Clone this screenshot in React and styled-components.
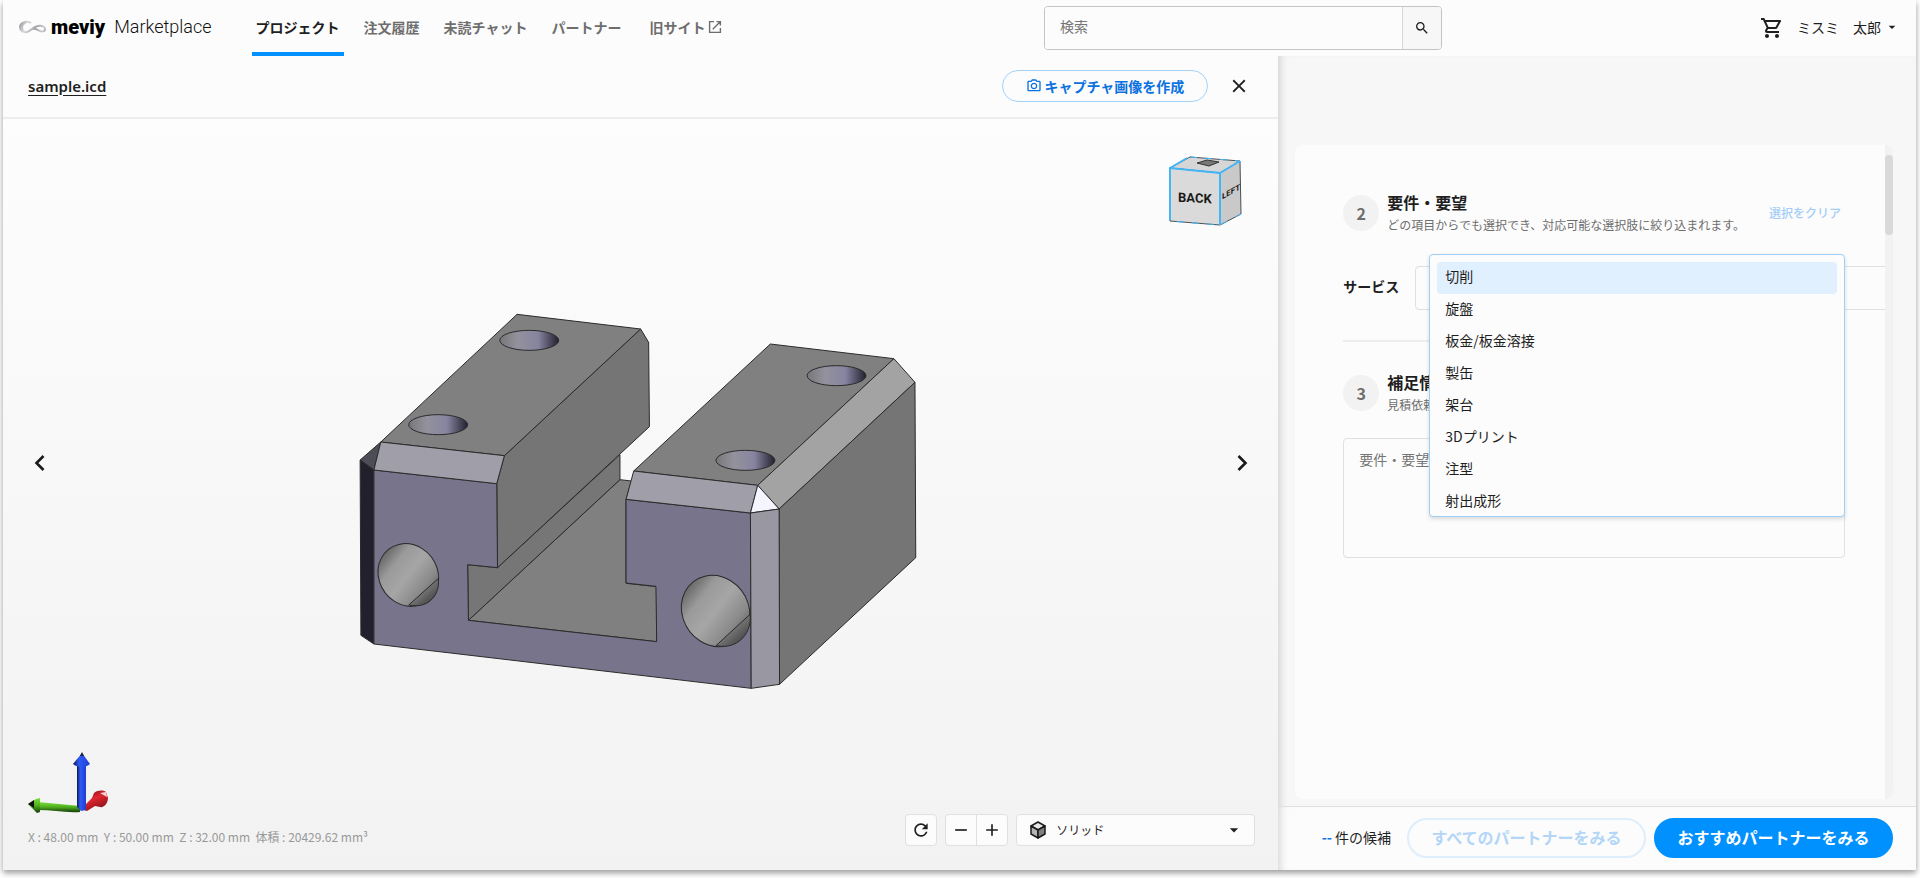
import React, { useState } from 'react'
import styled, { createGlobalStyle } from 'styled-components'
import {
  MdAdd,
  MdArrowDropDown,
  MdClose,
  MdOutlinePhotoCamera,
  MdOutlineShoppingCart,
  MdRefresh,
  MdRemove,
  MdSearch,
} from 'react-icons/md'

const textColor = '#1f1f1f'
const mutedColor = '#6e6e6e'
const lineColor = '#e0e0e0'
const surface = '#fcfcfc'
const primary = '#0091ff'
const link = '#0b72e0'

const navItems = ['プロジェクト', '注文履歴', '未読チャット', 'パートナー']
const services = ['切削', '旋盤', '板金/板金溶接', '製缶', '架台', '3Dプリント', '注型', '射出成形']

const GlobalStyle = createGlobalStyle`
  * { box-sizing: border-box; }
  body {
    margin: 0;
    background: #fff;
    color: ${textColor};
    font-family: "Noto Sans CJK JP", sans-serif;
    font-size: 14px;
    line-height: 20px;
  }
  button, input, select, textarea { font: inherit; color: inherit; margin: 0; }
  button { cursor: pointer; padding: 0; border: 0; background: none; }
  svg { display: block; flex-shrink: 0; }
`

const Frame = styled.div`
  display: flex;
  flex-direction: column;
  min-height: calc(100vh - 8px);
  margin: 0 4px 8px 3px;
  background: ${surface};
  box-shadow: 0 3px 6px rgba(0, 0, 0, 0.4);
`

/* ---- header ---- */

const Header = styled.header`
  display: grid;
  grid-template-columns: 1fr 398px 426px;
  align-items: center;
  column-gap: 32px;
  height: 56px;
  padding: 0 16px;
`

const HeaderLeft = styled.div`
  display: flex;
  align-items: center;
  gap: 40px;
  height: 56px;
`

const Logo = styled.a`
  display: flex;
  align-items: center;
  color: #111;
  text-decoration: none;
  white-space: nowrap;
  font-family: Roboto, sans-serif;
  font-weight: 300;
  font-size: 18px;
  gap: 4px;
  padding-bottom: 2px;
`

const LogoBrand = styled.b`
  font-weight: 900;
  font-size: 20px;
  color: #000;
  margin-right: 5px;
`

const Nav = styled.nav`
  display: flex;
  gap: 16px;
`

const NavLink = styled.a`
  display: flex;
  align-items: center;
  gap: 3px;
  height: 56px;
  padding: 2px 4px 0;
  border-bottom: 4px solid ${p => (p.$active ? primary : 'transparent')};
  color: ${p => (p.$active ? textColor : mutedColor)};
  font-weight: 700;
  text-decoration: none;
  white-space: nowrap;
  &:last-child { margin-left: 4px; }
`

const SearchForm = styled.form`
  display: flex;
  height: 44px;
  border: 1px solid #c4c4c4;
  border-radius: 4px;
  overflow: hidden;
`

const SearchInput = styled.input`
  flex: 1;
  min-width: 0;
  padding: 0 15px 4px;
  border: 0;
  background: ${surface};
  &::placeholder { color: #757575; }
`

const SearchButton = styled.button`
  display: grid;
  place-items: center;
  width: 39px;
  border-left: 1px solid #d6d6d6;
  background: #f7f7f7;
`

const Account = styled.div`
  display: flex;
  align-items: center;
  justify-content: flex-end;
  gap: 9px;
`

const UserButton = styled.button`
  display: flex;
  align-items: center;
  gap: 3px;
  padding-bottom: 2px;
  white-space: pre;
`

/* ---- left: viewer ---- */

const Main = styled.main`
  flex: 1;
  display: grid;
  grid-template-columns: minmax(0, 2fr) minmax(0, 1fr);
`

const Viewer = styled.section`
  display: flex;
  flex-direction: column;
`

const FileBar = styled.div`
  display: flex;
  align-items: center;
  gap: 15px;
  height: 63px;
  padding: 0 23px 2px 25px;
  border-bottom: 2px solid #ededed;
`

const FileName = styled.a`
  margin-right: auto;
  color: ${textColor};
  font-family: "Noto Sans", sans-serif;
  font-size: 15px;
  font-weight: 600;
  text-underline-offset: 3px;
`

const CaptureButton = styled.button`
  display: flex;
  align-items: center;
  gap: 2px;
  height: 32px;
  padding: 0 23px;
  border: 1px solid #a3d3fb;
  border-radius: 16px;
  color: ${link};
  font-weight: 700;
`

const IconButton = styled.button`
  display: grid;
  place-items: center;
  width: 32px;
  height: 32px;
`

const Canvas = styled.div`
  flex: 1;
  display: flex;
  flex-direction: column;
  position: relative;
  background: linear-gradient(#fdfdfd, #f2f2f2);
`

const Stage = styled.div`
  flex: 1;
  display: flex;
  align-items: center;
  justify-content: space-between;
  padding: 0 20px;
`

const ViewCube = styled.svg`
  position: absolute;
  top: 35px;
  right: 33px;
`

const AxisGizmo = styled.svg`
  position: absolute;
  left: 25px;
  bottom: 54px;
`

const CanvasFooter = styled.div`
  display: flex;
  align-items: center;
  gap: 8px;
  height: 64px;
  padding: 0 23px 16px 25px;
`

const Dimensions = styled.p`
  margin: 0 auto 0 0;
  padding-top: 14px;
  color: #999;
  font-size: 12px;
  white-space: pre;
  line-height: 16px;
`

const ToolGroup = styled.div`
  display: flex;
  height: 32px;
  border: 1px solid ${lineColor};
  border-radius: 4px;
  background: ${surface};
`

const ToolButton = styled.button`
  display: grid;
  place-items: center;
  width: 30px;
  & + & {
    width: 31px;
    border-left: 1px solid ${lineColor};
  }
`

const ModePicker = styled.label`
  display: flex;
  align-items: center;
  gap: 10px;
  width: 239px;
  height: 32px;
  padding: 0 10px 0 13px;
  border: 1px solid ${lineColor};
  border-radius: 4px;
  background: ${surface};
`

const PlainSelect = styled.select`
  flex: 1;
  appearance: none;
  padding: 0;
  border: 0;
  background: transparent;
  font-size: 12px;
`

/* ---- right: request form ---- */

const SidePanel = styled.aside`
  display: flex;
  flex-direction: column;
  background: #f7f7f7;
  box-shadow: inset 8px 0 8px -6px rgba(0, 0, 0, 0.16);
`

const Card = styled.div`
  flex: 1;
  display: flex;
  margin: 89px 23px 7px 17px;
  border-radius: 8px;
  background: ${surface};
  overflow: hidden;
`

const CardBody = styled.div`
  flex: 1;
  min-width: 0;
  padding: 45px 40px 0 48px;
  overflow: hidden;
`

const ScrollTrack = styled.div`
  width: 8px;
  padding-top: 10px;
  background: #f2f2f2;
`

const ScrollThumb = styled.div`
  height: 80px;
  border-radius: 4px;
  background: #d9d9d9;
`

const StepHeader = styled.div`
  display: flex;
  align-items: center;
  gap: 8px;
  height: 46px;
`

const StepNumber = styled.span`
  display: grid;
  place-items: center;
  width: 36px;
  height: 36px;
  border-radius: 50%;
  background: #f2f2f2;
  color: ${mutedColor};
  font-size: 16px;
  font-weight: 700;
`

const StepTitle = styled.h2`
  margin: 0 0 4px;
  font-size: 16px;
  line-height: 20px;
`

const StepNote = styled.p`
  margin: 0;
  color: ${mutedColor};
  font-size: 12px;
  line-height: 18px;
  white-space: nowrap;
`

const ClearButton = styled.button`
  margin-left: auto;
  padding-right: 4px;
  color: #a3cdf8;
  font-size: 12px;
  font-weight: 500;
  white-space: nowrap;
`

const FieldRow = styled.div`
  position: relative;
  display: flex;
  align-items: center;
  gap: 16px;
  margin: 30px 0;
`

const FieldLabel = styled.label`
  flex-shrink: 0;
  padding-bottom: 4px;
  font-weight: 700;
`

const ServiceSelect = styled.select`
  flex: 0 0 100%;
  height: 44px;
  appearance: none;
  border: 1px solid ${lineColor};
  border-radius: 4px;
  background: ${surface};
`

/* раскрытый список лежит поверх формы */
const Options = styled.ul`
  position: absolute;
  z-index: 2;
  top: -12px;
  left: 86px;
  right: 0;
  height: 263px;
  margin: 0;
  padding: 7px;
  border: 1px solid #9fcff7;
  border-radius: 4px;
  background: ${surface};
  box-shadow: 0 2px 4px rgba(0, 0, 0, 0.14);
  list-style: none;
`

const Option = styled.li`
  height: 32px;
  padding: 0 8px;
  border-radius: 4px;
  line-height: 28px;
  background: ${p => (p.$selected ? '#e0f0ff' : 'transparent')};
  cursor: pointer;
`

const Divider = styled.hr`
  margin: 0 0 28px;
  border: 0;
  border-top: 2px solid #ededed;
`

const Notes = styled.textarea`
  display: block;
  width: 100%;
  height: 120px;
  margin-top: 22px;
  padding: 10px 15px;
  border: 1px solid ${lineColor};
  border-radius: 4px;
  background: ${surface};
  resize: none;
  &::placeholder { color: #757575; }
`

const ActionBar = styled.footer`
  display: flex;
  align-items: center;
  justify-content: flex-end;
  gap: 8px;
  height: 64px;
  padding: 0 23px 2px 16px;
  border-top: 1px solid ${lineColor};
  background: ${surface};
  box-shadow: inset 8px 0 8px -6px rgba(0, 0, 0, 0.16);
`

const Count = styled.span`
  margin-right: 8px;
  padding-bottom: 2px;
  white-space: nowrap;
  b { color: ${link}; margin-right: 3px; }
`

const PillButton = styled.button`
  width: 239px;
  height: 40px;
  padding-bottom: 2px;
  border-radius: 20px;
  border: 2px solid ${p => (p.$filled ? primary : '#deeefc')};
  background: ${p => (p.$filled ? primary : surface)};
  color: ${p => (p.$filled ? '#fff' : '#b3d6f8')};
  font-size: 16px;
  font-weight: 700;
  white-space: nowrap;
`

function LogoMark() {
  return (
    <svg width="28" height="15" viewBox="0 0 28 15" fill="none" aria-hidden="true">
      <defs>
        <linearGradient id="mark" x1="0" y1="0" x2="28" y2="12" gradientUnits="userSpaceOnUse">
          <stop offset="0" stopColor="#8c8a90" />
          <stop offset="0.3" stopColor="#dedce0" />
          <stop offset="0.6" stopColor="#a3a1a6" />
          <stop offset="0.85" stopColor="#cfcdd1" />
          <stop offset="1" stopColor="#9a989c" />
        </linearGradient>
      </defs>
      <path
        d="M12 3C7 0 1 3 1 7c0 4 4 6 7 5 4-1 5-5 11-6 4-1 7 1 7 3 0 3-4 3-7 1-2-1-4-2-6-1"
        stroke="url(#mark)"
        strokeWidth="2"
      />
      <path d="M1 7C1 3 7 0 12 3 8 2 5 4 4 7c0 3 2 4 4 5-3 1-7-1-7-5z" fill="url(#mark)" />
    </svg>
  )
}

function ExternalIcon() {
  return (
    <svg width="14" height="14" viewBox="0 0 14 14" fill="none" stroke="currentColor" strokeWidth="1.4" aria-hidden="true">
      <path d="M6 1.6H1.6v10.8h10.8V8M8.5 1.6h3.9v4M12.2 1.8 4.8 9.2" />
    </svg>
  )
}

function Chevron({ flip }) {
  return (
    <svg width="24" height="24" viewBox="0 0 24 24" fill="none" stroke="#1a1a1a" strokeWidth="2.6" aria-hidden="true">
      <path d={flip ? 'M8.5 5l7 7-7 7' : 'M16.5 5l-7 7 7 7'} />
    </svg>
  )
}

function SolidIcon() {
  return (
    <svg width="16" height="18" viewBox="0 0 16 18" stroke="#1a1a1a" strokeWidth="1.5" strokeLinejoin="round" aria-hidden="true">
      <path d="M8 1l7 4-7 4-7-4z" fill="#e6e6e6" />
      <path d="M1 5l7 4v8l-7-4z" fill="#b3b3b3" />
      <path d="M15 5L8 9v8l7-4z" fill="#808080" />
    </svg>
  )
}

function Cube() {
  return (
    <ViewCube width="80" height="76" viewBox="0 0 80 76" aria-hidden="true">
      <g stroke="#4a4f55" strokeWidth="1" strokeLinejoin="round">
        <path d="M5 14L25 3 75 7 55 19z" fill="#d6d6d6" />
        <path d="M5 14L55 19v52L5 67z" fill="#dadada" />
        <path d="M55 19L75 7l1 53-21 11z" fill="#c9c9c9" />
      </g>
      <path d="M5 66V14l50 5v52M5 14L22 4M55 19l20-12" fill="none" stroke="#45b6f5" strokeWidth="2" />
      <path d="M25 3l50 4M76 60L55 71 5 67" fill="none" stroke="#45b6f5" strokeWidth="1" strokeDasharray="7 8" />
      <path d="M32 9l10-3 12 2-10 4z" fill="#777" stroke="#333" />
      <g fontFamily="Roboto, sans-serif" fontWeight="700" fill="#1a1a1a">
        <text x="13" y="47" fontSize="13" transform="skewY(3)">BACK</text>
        <text x="57" y="77" fontSize="8" transform="skewY(-29)">LEFT</text>
      </g>
    </ViewCube>
  )
}

function Axes() {
  return (
    <AxisGizmo width="80" height="64" viewBox="0 0 80 64" aria-hidden="true">
      <defs>
        <linearGradient id="axisZ">
          <stop offset="0" stopColor="#0c1450" />
          <stop offset="0.35" stopColor="#2f5bf5" />
          <stop offset="1" stopColor="#1f3fd0" />
        </linearGradient>
        <linearGradient id="axisY" x2="0" y2="1">
          <stop offset="0" stopColor="#7be03a" />
          <stop offset="0.5" stopColor="#4fae1e" />
          <stop offset="1" stopColor="#123d06" />
        </linearGradient>
        <linearGradient id="axisX" x2="0.6" y2="1">
          <stop offset="0" stopColor="#5a0d12" />
          <stop offset="0.5" stopColor="#e02530" />
          <stop offset="1" stopColor="#8a1218" />
        </linearGradient>
      </defs>
      <path d="M53 57l11-11 2-5c4-3 9-3 12-1l2 6c0 5-4 10-8 9l-5-1-8 5z" fill="url(#axisX)" />
      <path d="M72 41l6-1 1 5z" fill="#f7d4d4" />
      <path d="M10 50l42 4v6c-14 1-28-2-42-2z" fill="url(#axisY)" />
      <path d="M0 52l8-5 4-1v14l-3 1z" fill="url(#axisY)" />
      <path d="M0 52l6-4v8z" fill="#111" />
      <path d="M49 12h9v46l-5 1-4-4z" fill="url(#axisZ)" />
      <path d="M54 1l-9 11c4 4 13 4 17 0z" fill="url(#axisZ)" />
      <path d="M52 4l2-4 2 4z" fill="#1a2238" />
    </AxisGizmo>
  )
}

const topHoles = [[494, 151], [256, 404], [1297, 257], [1059, 511]]

function Model() {
  return (
    <svg width="600" height="494" viewBox="2 -222 1568 1482" preserveAspectRatio="none" role="img" aria-label="sample.icd">
      <defs>
        <linearGradient id="holeTop">
          <stop offset="0" stopColor="#77777a" />
          <stop offset="0.3" stopColor="#93929c" />
          <stop offset="0.65" stopColor="#8784a0" />
          <stop offset="1" stopColor="#222030" />
        </linearGradient>
        <linearGradient id="holeFront" x1="0.15" y1="0" x2="0.85" y2="1">
          <stop offset="0.05" stopColor="#5e5e5e" />
          <stop offset="0.28" stopColor="#9a9a9a" />
          <stop offset="0.5" stopColor="#a6a6a6" />
          <stop offset="0.75" stopColor="#8a8a8a" />
          <stop offset="1" stopColor="#4c4c4c" />
        </linearGradient>
        <linearGradient id="holeEdge" x1="0.3" y1="0.4" x2="0.8" y2="0.9">
          <stop offset="0" stopColor="#858585" />
          <stop offset="1" stopColor="#444" />
        </linearGradient>
      </defs>
      <g stroke="#2b2b2b" strokeWidth="1" strokeLinejoin="round">
        {/* floor of the slot and its walls */}
        <path d="M335 991L731 569l30 4-14 55v252l80 10v165z" fill="#808080" vectorEffect="non-scaling-stroke" />
        <path d="M333 824l78 9 320-339v75L335 991z" fill="#767676" vectorEffect="non-scaling-stroke" />
        <path d="M429 497L785 117l21 40 2 253-397 423-2-252z" fill="#757575" vectorEffect="non-scaling-stroke" />
        {/* top faces */}
        <path d="M462 73l323 44-356 380-323-41z" fill="#808080" vectorEffect="non-scaling-stroke" />
        <path d="M1124 162l323 44-356 380-324-43z" fill="#808080" vectorEffect="non-scaling-stroke" />
        {/* right side */}
        <path d="M1447 206l55 71-355 380-56-71z" fill="#a3a3a3" vectorEffect="non-scaling-stroke" />
        <path d="M1147 657l355-380 2 526-356 380z" fill="#757575" vectorEffect="non-scaling-stroke" />
        {/* left chamfer */}
        <path d="M106 456L52 510l36 30z" fill="#4d4d57" vectorEffect="non-scaling-stroke" />
        <path d="M52 510l36 30v522l-34-26z" fill="#23202e" vectorEffect="non-scaling-stroke" />
        {/* front face */}
        <path
          d="M88 540l321 41 2 252-78-9 2 167 492 64-2-166-78-10V628l325 41 2 526L88 1062z"
          fill="#78748b"
          vectorEffect="non-scaling-stroke"
        />
        <path d="M106 456l323 41-20 84-321-41z" fill="#9f9ea9" vectorEffect="non-scaling-stroke" />
        <path d="M767 543l324 43-19 83-325-41z" fill="#9f9ea9" vectorEffect="non-scaling-stroke" />
        <path d="M1091 586l56 71-75 12z" fill="#f5f5ff" vectorEffect="non-scaling-stroke" />
        <path d="M1072 669l75-12 1 526-74 12z" fill="#9897a2" vectorEffect="non-scaling-stroke" />
        {topHoles.map(([x, y]) => (
          <ellipse key={x} cx={x} cy={y} rx="77" ry="30" fill="url(#holeTop)" vectorEffect="non-scaling-stroke" />
        ))}
        <ellipse cx="178" cy="855" rx="78" ry="95" transform="rotate(-15 178 855)" fill="url(#holeFront)" vectorEffect="non-scaling-stroke" />
        <path d="M179 945l77-79c6 44-22 92-77 79z" fill="url(#holeEdge)" vectorEffect="non-scaling-stroke" />
        <ellipse cx="981" cy="963" rx="88" ry="108" transform="rotate(-15 981 963)" fill="url(#holeFront)" vectorEffect="non-scaling-stroke" />
        <path d="M982 1067l89-94c6 48-26 108-89 94z" fill="url(#holeEdge)" vectorEffect="non-scaling-stroke" />
      </g>
    </svg>
  )
}

export default function App() {
  const [service, setService] = useState(services[0])

  return (
    <Frame>
      <GlobalStyle />
      <Header>
        <HeaderLeft>
          <Logo href="#">
            <LogoMark />
            <LogoBrand>meviy</LogoBrand>
            Marketplace
          </Logo>
          <Nav>
            {navItems.map((item, i) => (
              <NavLink key={item} href="#" $active={i === 0}>{item}</NavLink>
            ))}
            <NavLink href="#">旧サイト<ExternalIcon /></NavLink>
          </Nav>
        </HeaderLeft>
        <SearchForm role="search">
          <SearchInput type="search" placeholder="検索" aria-label="検索" />
          <SearchButton type="button" aria-label="検索"><MdSearch size={16} /></SearchButton>
        </SearchForm>
        <Account>
          <IconButton aria-label="カート"><MdOutlineShoppingCart size={24} /></IconButton>
          <UserButton>ミスミ　太郎<MdArrowDropDown size={16} /></UserButton>
        </Account>
      </Header>

      <Main>
        <Viewer>
          <FileBar>
            <FileName href="#">sample.icd</FileName>
            <CaptureButton><MdOutlinePhotoCamera size={16} />キャプチャ画像を作成</CaptureButton>
            <IconButton aria-label="閉じる"><MdClose size={22} /></IconButton>
          </FileBar>
          <Canvas>
            <Stage>
              <IconButton aria-label="前へ"><Chevron /></IconButton>
              <Model />
              <IconButton aria-label="次へ"><Chevron flip /></IconButton>
            </Stage>
            <Cube />
            <Axes />
            <CanvasFooter>
              <Dimensions>{'X : 48.00 mm  Y : 50.00 mm  Z : 32.00 mm  体積 : 20429.62 mm³'}</Dimensions>
              <ToolGroup>
                <ToolButton aria-label="リセット"><MdRefresh size={20} /></ToolButton>
              </ToolGroup>
              <ToolGroup>
                <ToolButton aria-label="縮小"><MdRemove size={20} /></ToolButton>
                <ToolButton aria-label="拡大"><MdAdd size={20} /></ToolButton>
              </ToolGroup>
              <ModePicker>
                <SolidIcon />
                <PlainSelect aria-label="表示モード">
                  <option>ソリッド</option>
                </PlainSelect>
                <MdArrowDropDown size={20} />
              </ModePicker>
            </CanvasFooter>
          </Canvas>
        </Viewer>

        <SidePanel>
          <Card>
            <CardBody>
              <StepHeader>
                <StepNumber>2</StepNumber>
                <div>
                  <StepTitle>要件・要望</StepTitle>
                  <StepNote>どの項目からでも選択でき、対応可能な選択肢に絞り込まれます。</StepNote>
                </div>
                <ClearButton>選択をクリア</ClearButton>
              </StepHeader>
              <FieldRow>
                <FieldLabel htmlFor="service">サービス</FieldLabel>
                <ServiceSelect id="service" defaultValue="">
                  <option value="" />
                  {services.map(s => <option key={s}>{s}</option>)}
                </ServiceSelect>
                <Options role="listbox" aria-label="サービス">
                  {services.map(s => (
                    <Option
                      key={s}
                      role="option"
                      aria-selected={s === service}
                      $selected={s === service}
                      onClick={() => setService(s)}
                    >
                      {s}
                    </Option>
                  ))}
                </Options>
              </FieldRow>
              <Divider />
              <StepHeader>
                <StepNumber>3</StepNumber>
                <div>
                  <StepTitle>補足情</StepTitle>
                  <StepNote>見積依頼</StepNote>
                </div>
              </StepHeader>
              <Notes placeholder="要件・要望" aria-label="要件・要望" />
            </CardBody>
            <ScrollTrack><ScrollThumb /></ScrollTrack>
          </Card>
          <ActionBar>
            <Count><b>--</b>件の候補</Count>
            <PillButton disabled>すべてのパートナーをみる</PillButton>
            <PillButton $filled>おすすめパートナーをみる</PillButton>
          </ActionBar>
        </SidePanel>
      </Main>
    </Frame>
  )
}
